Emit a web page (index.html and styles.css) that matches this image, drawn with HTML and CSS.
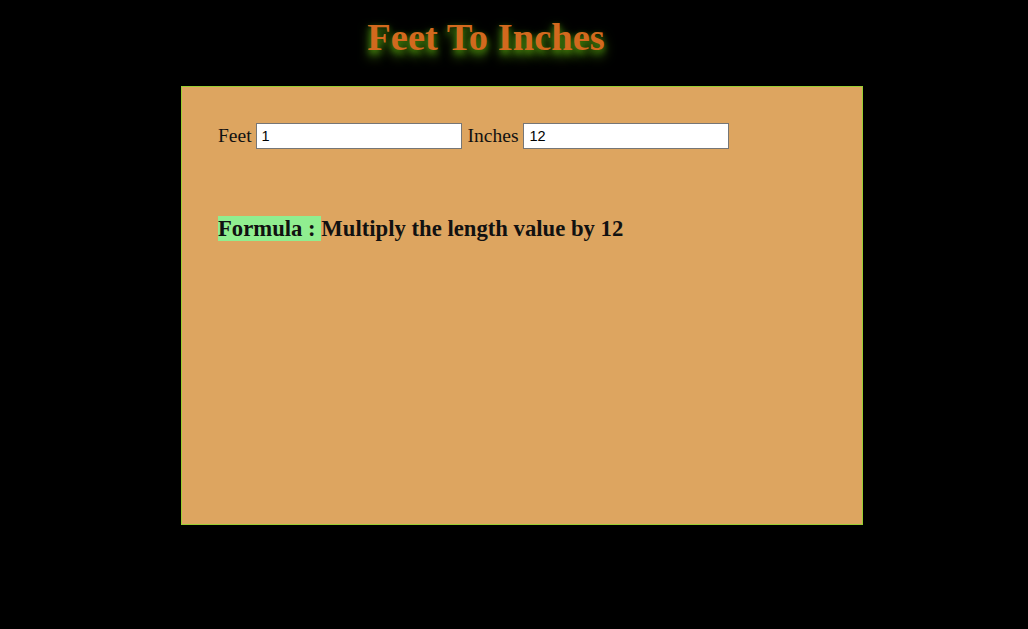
FILE: index.html
```html
<!DOCTYPE html>
<html>
<head>
<meta charset="utf-8">
<link rel="stylesheet" href="styles.css">
</head>
<body>
<div class="header"><h1 class="title">Feet To Inches</h1></div>
<div class="box">
  <div class="row">
    <label class="lbl">Feet</label>
    <input class="field" type="text" value="1">
    <label class="lbl lbl-wide">Inches</label>
    <input class="field" type="text" value="12">
  </div>
  <p class="formula"><span class="hl">Formula : </span>Multiply the length value by 12</p>
</div>
</body>
</html>
```
FILE: styles.css
```css
html, body {
  margin: 0;
  padding: 0;
  background: #000;
  font-family: "Liberation Serif", "Times New Roman", serif;
  height: 100%;
}
.header {
  width: 972px;
  text-align: center;
  padding-top: 13px;
  height: 86px;
  box-sizing: border-box;
}
.title {
  margin: 0;
  font-size: 38.5px;
  line-height: 48px;
  font-weight: bold;
  color: #d2691e;
  text-shadow: 0 6px 12px #4d8a10, 0 3px 6px #3b7a0a;
}
.box {
  margin-left: 181px;
  width: 680px;
  height: 437px;
  background: #dda560;
  border: 1px solid #9acd32;
  padding: 0;
}
.row {
  display: flex;
  align-items: center;
  padding: 36px 0 0 36px;
  height: 26px;
}
.lbl {
  font-size: 19.5px;
  color: #111;
  margin-right: 4px;
}
.lbl-wide {
  margin-left: 1px;
  margin-right: 5px;
}
.field {
  width: 206px;
  height: 26px;
  box-sizing: border-box;
  margin: 0 5px 0 0;
  border: 1px solid #767676;
  padding: 1px 5px;
  font-family: "Liberation Sans", Arial, sans-serif;
  font-size: 14.5px;
  background: #fff;
  color: #000;
}
.formula {
  margin: 67px 0 0 36px;
  font-size: 22.7px;
  font-weight: bold;
  color: #111;
  line-height: 25px;
}
.hl {
  background: #90ee90;
}
```
